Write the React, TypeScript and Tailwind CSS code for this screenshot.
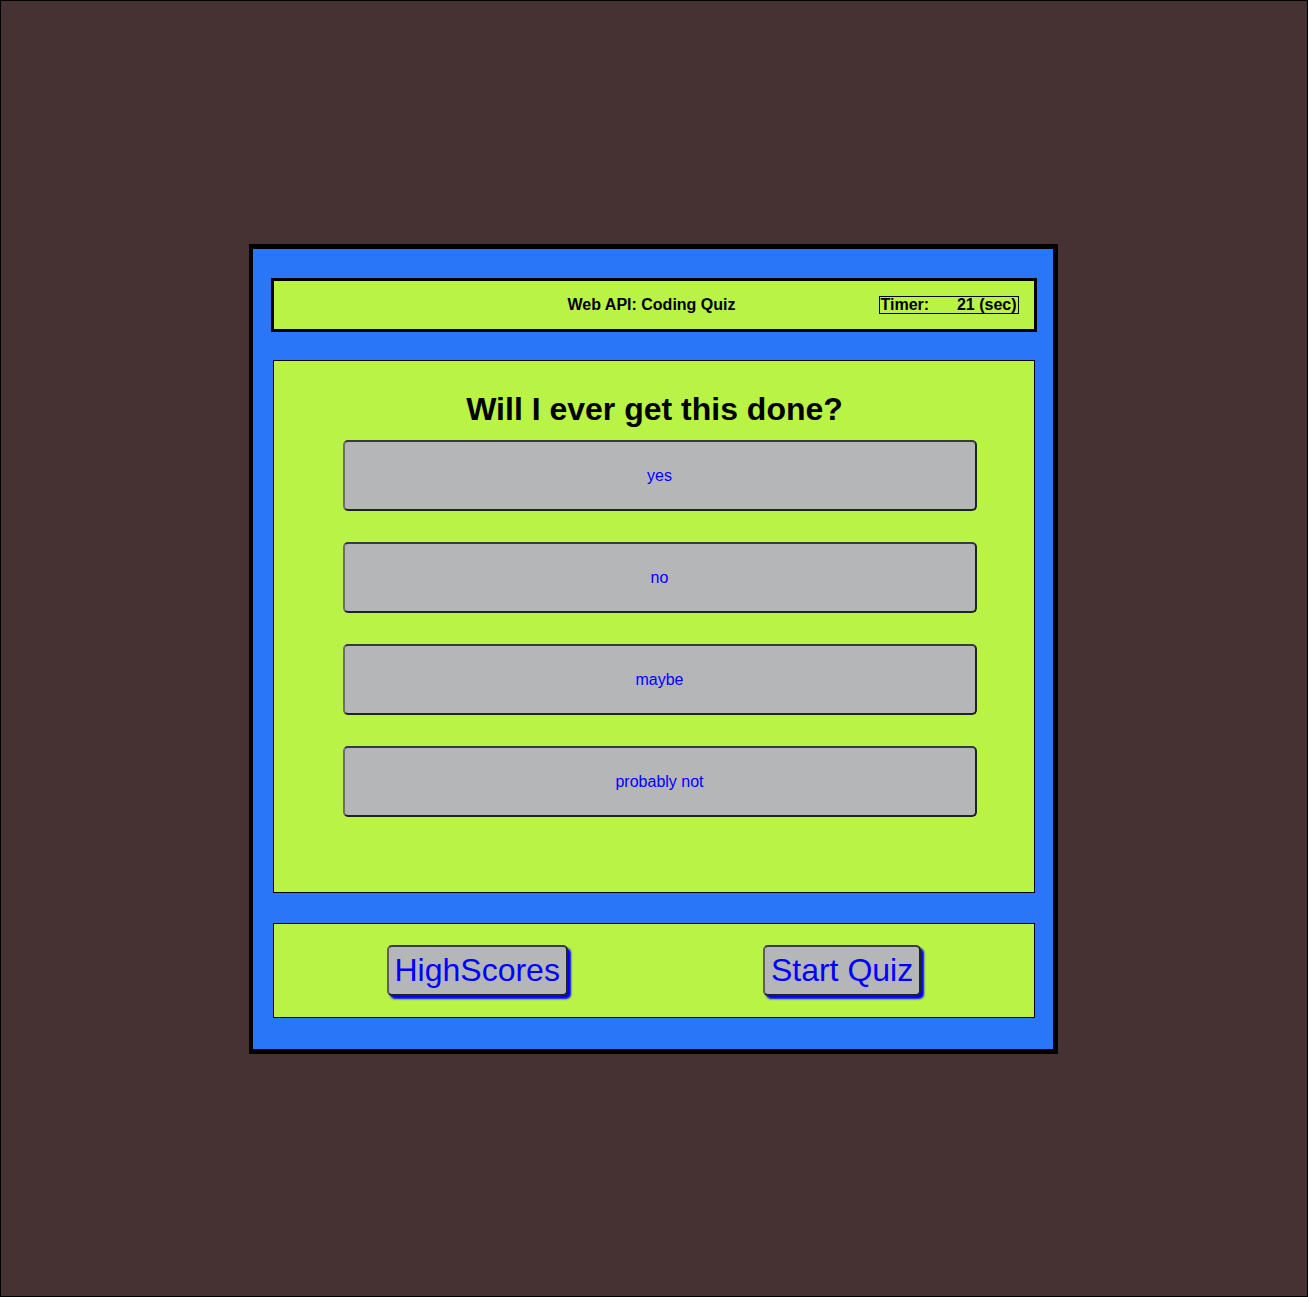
import React from "react";

const answers = ["yes", "no", "maybe", "probably not"];

export default function App() {
  return (
    <div
      className="flex h-[1297px] w-[1308px] items-center justify-center border border-black bg-[#463232]"
      style={{ fontFamily: '"Liberation Sans", Arial, sans-serif' }}
    >
      <div className="mr-[2px] flex w-[809px] flex-col items-start border-[5px] border-l-4 border-black bg-[#2a76f8] pb-[31px] pt-[29px]">
        {/* Header */}
        <div className="ml-[18px] grid h-[54px] w-[766px] grid-cols-[1fr_auto_1fr] items-center border-[3px] border-black bg-[#b8f346]">
          <div />
          <div className="mr-[4px] text-[16px] font-bold text-black">Web API: Coding Quiz</div>
          <div className="flex justify-end pr-[15px]">
            <div className="flex w-[140px] justify-between border border-black px-[1px] text-[16px] font-bold leading-[16px] text-black">
              <span>Timer:</span>
              <span>21 (sec)</span>
            </div>
          </div>
        </div>

        {/* Main panel */}
        <div className="ml-[20px] mt-[28px] flex h-[533px] w-[762px] flex-col items-start border border-black bg-[#b8f346] pt-[30px]">
          <h1 className="w-full pl-[2px] text-center text-[32px] font-bold leading-[37px] text-black">
            Will I ever get this done?
          </h1>
          <div className="mt-[12px] flex flex-col gap-[31px]">
            {answers.map((a) => (
              <button
                key={a}
                className="ml-[69px] h-[71px] w-[634px] rounded-[5px] border-2 border-[#222222] border-l-[#6e6e6e] border-t-[#3a3a3a] bg-[#b5b6b8] pt-[2px] text-[16px] text-[#0000ff]"
              >
                {a}
              </button>
            ))}
          </div>
        </div>

        {/* Bottom panel */}
        <div className="ml-[20px] mt-[30px] flex h-[95px] w-[762px] items-center border border-black bg-[#b8f346]">
          <button className="ml-[113px] h-[51px] rounded-[5px] border-2 border-[#222222] border-l-[#5e5e5e] border-t-[#3a3a3a] bg-[#b5b6b8] px-[6px] text-[32px] leading-[37px] text-[#0000ff] shadow-[3px_3px_2px_#0000ff]">
            HighScores
          </button>
          <button className="ml-[195px] h-[51px] rounded-[5px] border-2 border-[#222222] border-l-[#5e5e5e] border-t-[#3a3a3a] bg-[#b5b6b8] px-[6px] text-[32px] leading-[37px] text-[#0000ff] shadow-[3px_3px_2px_#0000ff]">
            Start Quiz
          </button>
        </div>
      </div>
    </div>
  );
}
